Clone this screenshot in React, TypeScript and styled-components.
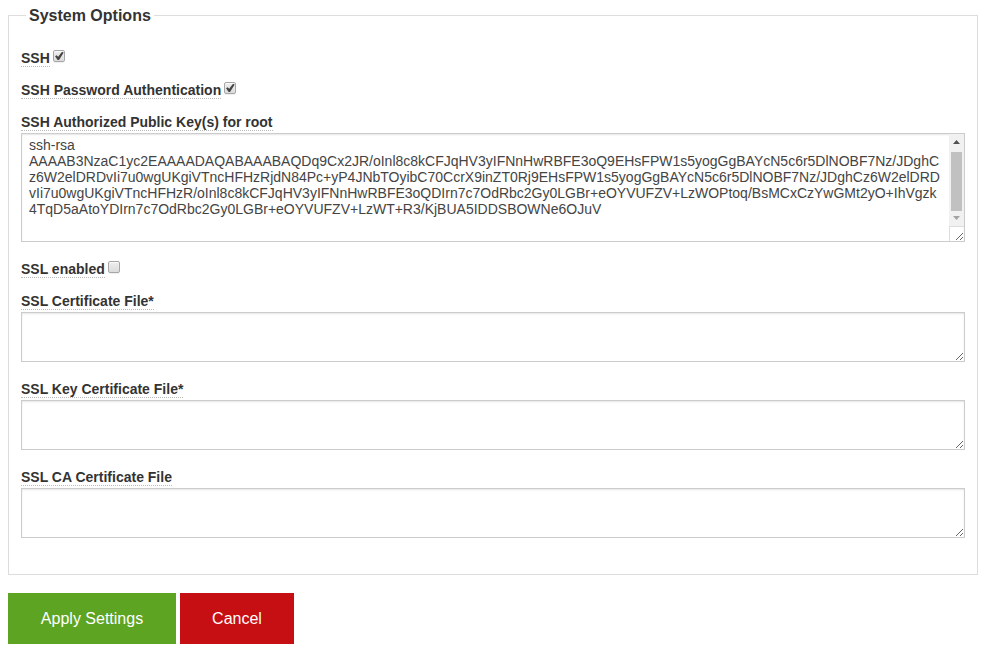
import React from "react";
import styled, { createGlobalStyle } from "styled-components";

const GlobalStyle = createGlobalStyle`
  *, *::before, *::after { box-sizing: border-box; }
  body {
    margin: 0;
    background: #fff;
    color: #333;
    font: 14px/16px "Helvetica Neue", "Liberation Sans", Arial, sans-serif;
  }
`;

const Form = styled.form`
  padding: 7px 19px 20px 8px;
`;

const Group = styled.fieldset`
  min-width: 0;
  margin: 0 0 18px;
  padding: 26px 12px 32px;
  border: 1px solid #ddd;
`;

const Legend = styled.legend`
  margin-left: 5px;
  padding: 0 3px;
  font-size: 16px;
  line-height: 17px;
  font-weight: bold;
`;

const Fields = styled.div`
  display: flex;
  flex-direction: column;
  gap: 15px;
`;

const CheckRow = styled.div`
  display: flex;
  align-items: flex-start;
  gap: 3px;
`;

const Field = styled.div`
  display: flex;
  flex-direction: column;
  align-items: flex-start;
  gap: 2px;
  padding-bottom: 4px;
`;

const Label = styled.label`
  border-bottom: 1px dotted #bbb;
  font-weight: bold;
`;

const Check = styled.input`
  appearance: none;
  width: 12px;
  height: 12px;
  margin: 0;
  border: 1px solid #a6a6a6;
  border-radius: 2px;
  background: linear-gradient(#eee, #dcdcdc);
  box-shadow: inset 0 1px 1px rgba(255, 255, 255, 0.8), 0 1px 0 rgba(0, 0, 0, 0.06);
  &:checked {
    background:
      url("data:image/svg+xml,%3Csvg xmlns='http://www.w3.org/2000/svg' viewBox='0 0 11 11'%3E%3Cpath d='M1.5 5.6 3 4.5 4.5 6.1 8.3 1 9.8 2 5.3 9 4 9Z' fill='%23444'/%3E%3C/svg%3E") center / 11px 11px no-repeat,
      linear-gradient(#eee, #dcdcdc);
  }
`;

const AreaBox = styled.div`
  position: relative;
  width: 100%;
`;

const TextArea = styled.textarea<{ $tall?: boolean }>`
  display: block;
  width: 100%;
  height: ${(p) => (p.$tall ? 109 : 50)}px;
  padding: 3px ${(p) => (p.$tall ? 24 : 7)}px 3px 7px;
  border: 1px solid #ccc;
  border-radius: 0;
  outline: none;
  resize: vertical;
  background: #fff;
  color: #444;
  font: inherit;
  word-break: break-all;
  box-shadow: inset 0 1px 2px rgba(0, 0, 0, 0.1);
  scrollbar-width: none;
`;

const ScrollBar = styled.div`
  position: absolute;
  inset: 1px 1px 15px auto;
  display: flex;
  flex-direction: column;
  width: 15px;
  border-bottom: 1px solid #ddd;
  background: #f1f1f1;
  pointer-events: none;
`;

const Thumb = styled.div`
  flex: 1;
  margin: 0 2px;
  background: #c1c1c1;
`;

const Corner = styled.div`
  position: absolute;
  right: 15px;
  bottom: 1px;
  width: 1px;
  height: 15px;
  background: #ddd;
`;

const Actions = styled.div`
  display: flex;
  gap: 4px;
`;

const Button = styled.button<{ $color: string; $width: number }>`
  min-width: ${(p) => p.$width}px;
  padding: 17px 24px 16px;
  border: 0;
  background: ${(p) => p.$color};
  color: #fff;
  font: inherit;
  font-size: 16px;
  line-height: 18px;
  cursor: pointer;
`;

const KEY =
  "ssh-rsa\n" +
  "AAAAB3NzaC1yc2EAAAADAQABAAABAQDq9Cx2JR/oInl8c8kCFJqHV3yIFNnHwRBFE3oQ9EHsFPW1s5yogGgBAYcN5c6r5DlNOBF7Nz/JDghC" +
  "z6W2elDRDvIi7u0wgUKgiVTncHFHzRjdN84Pc+yP4JNbTOyibC70CcrX9inZT0Rj9EHsFPW1s5yogGgBAYcN5c6r5DlNOBF7Nz/JDghCz6W2elDRD" +
  "vIi7u0wgUKgiVTncHFHzR/oInl8c8kCFJqHV3yIFNnHwRBFE3oQDIrn7c7OdRbc2Gy0LGBr+eOYVUFZV+LzWOPtoq/BsMCxCzYwGMt2yO+IhVgzk" +
  "4TqD5aAtoYDIrn7c7OdRbc2Gy0LGBr+eOYVUFZV+LzWT+R3/KjBUA5IDDSBOWNe6OJuV\n\n";

function Checkbox({ id, label, checked }: { id: string; label: string; checked?: boolean }) {
  return (
    <CheckRow>
      <Label htmlFor={id}>{label}</Label>
      <Check id={id} type="checkbox" defaultChecked={checked} />
    </CheckRow>
  );
}

function TextField({ id, label, value, tall }: { id: string; label: string; value?: string; tall?: boolean }) {
  return (
    <Field>
      <Label htmlFor={id}>{label}</Label>
      <AreaBox>
        <TextArea id={id} $tall={tall} defaultValue={value} spellCheck={false} />
        {tall && (
          <>
            <ScrollBar aria-hidden="true">
              <svg width="15" height="18"><path d="M4 10 7.5 6 11 10Z" fill="#505050" /></svg>
              <Thumb />
              <svg width="15" height="15"><path d="M4 5 7.5 9 11 5Z" fill="#a3a3a3" /></svg>
            </ScrollBar>
            <Corner />
          </>
        )}
      </AreaBox>
    </Field>
  );
}

export default function App() {
  return (
    <>
      <GlobalStyle />
      <Form onSubmit={(e) => e.preventDefault()}>
        <Group>
          <Legend>System Options</Legend>
          <Fields>
            <Checkbox id="ssh" label="SSH" checked />
            <Checkbox id="ssh-password" label="SSH Password Authentication" checked />
            <TextField id="ssh-keys" label="SSH Authorized Public Key(s) for root" value={KEY} tall />
            <Checkbox id="ssl" label="SSL enabled" />
            <TextField id="ssl-cert" label="SSL Certificate File*" />
            <TextField id="ssl-key" label="SSL Key Certificate File*" />
            <TextField id="ssl-ca" label="SSL CA Certificate File" />
          </Fields>
        </Group>
        <Actions>
          <Button type="submit" $color="#5da423" $width={168}>Apply Settings</Button>
          <Button type="button" $color="#c60f13" $width={114}>Cancel</Button>
        </Actions>
      </Form>
    </>
  );
}
